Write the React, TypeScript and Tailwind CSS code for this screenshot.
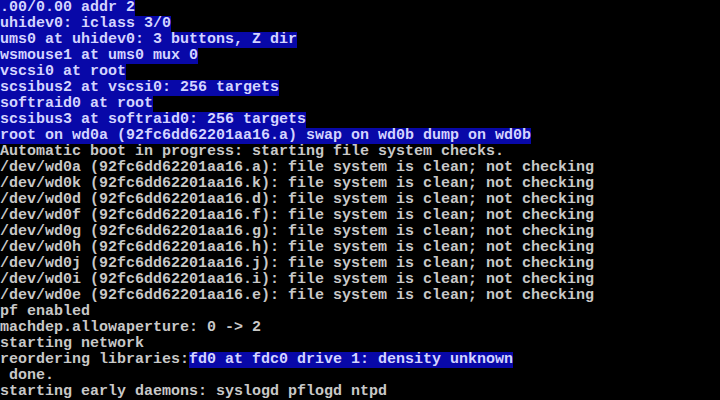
type Seg = { text: string; hl?: boolean };

const LINES: Seg[][] = [
  [{ text: ".00/0.00 addr 2", hl: true }],
  [{ text: "uhidev0: iclass 3/0", hl: true }],
  [{ text: "ums0 at uhidev0: 3 buttons, Z dir", hl: true }],
  [{ text: "wsmouse1 at ums0 mux 0", hl: true }],
  [{ text: "vscsi0 at root", hl: true }],
  [{ text: "scsibus2 at vscsi0: 256 targets", hl: true }],
  [{ text: "softraid0 at root", hl: true }],
  [{ text: "scsibus3 at softraid0: 256 targets", hl: true }],
  [{ text: "root on wd0a (92fc6dd62201aa16.a) swap on wd0b dump on wd0b", hl: true }],
  [{ text: "Automatic boot in progress: starting file system checks." }],
  [{ text: "/dev/wd0a (92fc6dd62201aa16.a): file system is clean; not checking" }],
  [{ text: "/dev/wd0k (92fc6dd62201aa16.k): file system is clean; not checking" }],
  [{ text: "/dev/wd0d (92fc6dd62201aa16.d): file system is clean; not checking" }],
  [{ text: "/dev/wd0f (92fc6dd62201aa16.f): file system is clean; not checking" }],
  [{ text: "/dev/wd0g (92fc6dd62201aa16.g): file system is clean; not checking" }],
  [{ text: "/dev/wd0h (92fc6dd62201aa16.h): file system is clean; not checking" }],
  [{ text: "/dev/wd0j (92fc6dd62201aa16.j): file system is clean; not checking" }],
  [{ text: "/dev/wd0i (92fc6dd62201aa16.i): file system is clean; not checking" }],
  [{ text: "/dev/wd0e (92fc6dd62201aa16.e): file system is clean; not checking" }],
  [{ text: "pf enabled" }],
  [{ text: "machdep.allowaperture: 0 -> 2" }],
  [{ text: "starting network" }],
  [
    { text: "reordering libraries:" },
    { text: "fd0 at fdc0 drive 1: density unknown", hl: true },
  ],
  [{ text: " done." }],
  [{ text: "starting early daemons: syslogd pflogd ntpd" }],
];

export default function App() {
  return (
    <div className="w-[720px] h-[400px] overflow-hidden bg-black font-['Liberation_Mono',monospace] text-[15px] leading-4 font-bold text-[#c8c8c8]">
      {LINES.map((line, i) => (
        <div key={i} className="flex h-4 whitespace-pre">
          {line.map((seg, j) => (
            <span
              key={j}
              className={seg.hl ? "bg-[#0808a8] text-[#d4d4ff]" : undefined}
            >
              {seg.text}
            </span>
          ))}
        </div>
      ))}
    </div>
  );
}
